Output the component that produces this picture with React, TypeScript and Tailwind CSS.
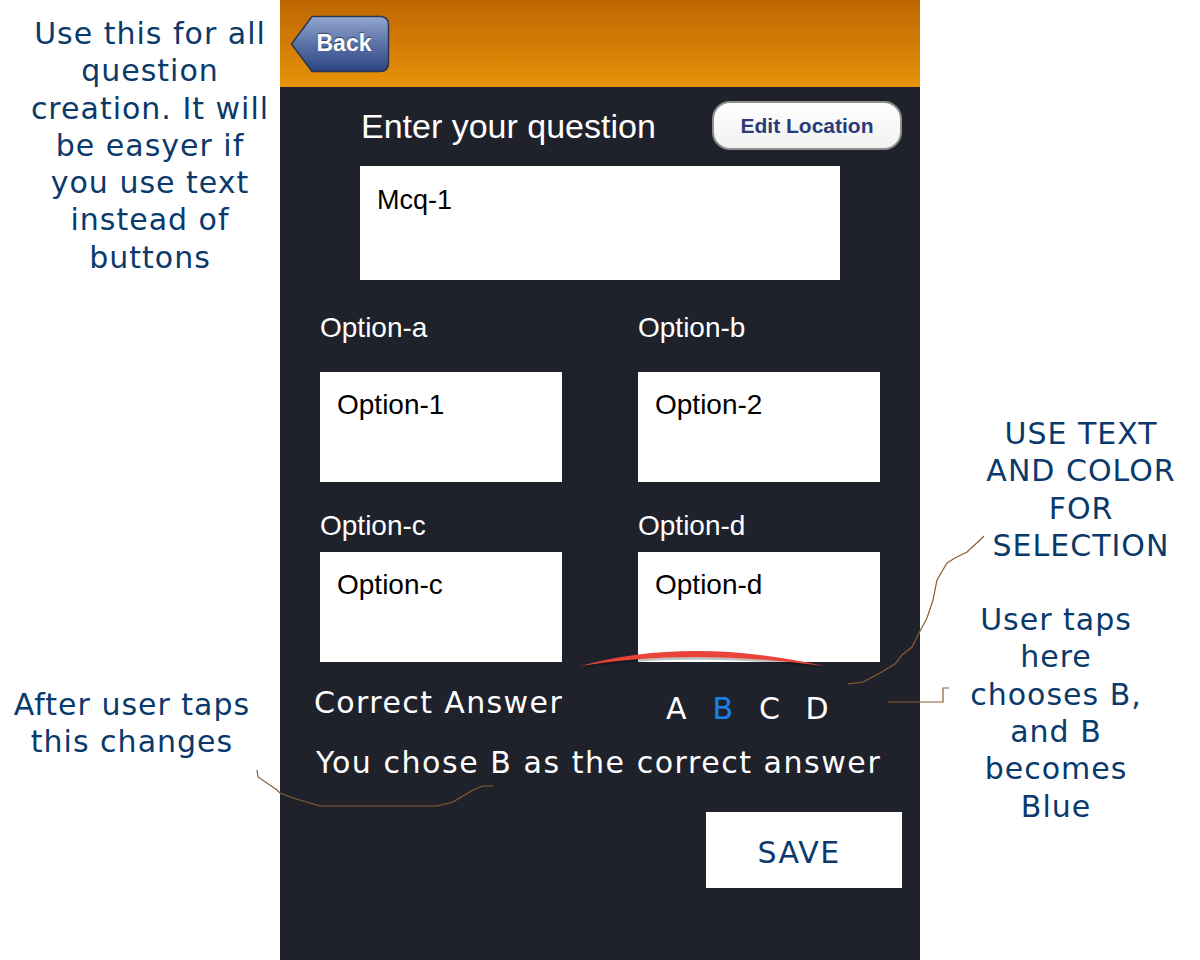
import { useState } from 'react'

const note = "font-['DejaVu_Sans',Verdana,sans-serif] text-[30px] leading-[37.3px] tracking-[1px] text-[#0a3a6b] text-center"
const ios = "font-['Liberation_Sans',Arial,sans-serif]"
const verd = "font-['DejaVu_Sans',Verdana,sans-serif]"

function BackButton() {
  return (
    <div className="relative w-[100px] h-[58px]">
      <svg className="absolute inset-0" width="100" height="58" viewBox="0 0 100 58">
        <defs>
          <linearGradient id="backGrad" x1="0" y1="0" x2="0" y2="1">
            <stop offset="0" stopColor="#95a7d0" />
            <stop offset="0.5" stopColor="#5b72a8" />
            <stop offset="1" stopColor="#2c4580" />
          </linearGradient>
        </defs>
        <path
          d="M1.5 29 L22 1.5 H90 Q98.5 1.5 98.5 10 V48 Q98.5 56.5 90 56.5 H22 Z"
          fill="url(#backGrad)"
          stroke="#2a3552"
          strokeWidth="1.5"
        />
      </svg>
      <span
        className={`${ios} absolute inset-0 flex items-center justify-center pl-[8px] text-[23px] font-bold text-white`}
        style={{ textShadow: '0 -1px 1px rgba(0,0,0,0.5)' }}
      >
        Back
      </span>
    </div>
  )
}

function OptionBox({ text }: { text: string }) {
  return (
    <div className={`${ios} h-[110px] bg-white pl-[17px] pt-[19px] text-[28px] leading-none text-black`}>{text}</div>
  )
}

export default function App() {
  const [answer, setAnswer] = useState('B')
  const letters = ['A', 'B', 'C', 'D']

  return (
    <div className="relative w-[1200px] h-[960px] bg-white flex overflow-hidden">
      {/* left notes */}
      <div className="w-[280px] flex flex-col">
        <div className={`${note} pl-[20px] pt-[15px]`}>
          Use this for all
          <br />
          question
          <br />
          creation. It will
          <br />
          be easyer if
          <br />
          you use text
          <br />
          instead of
          <br />
          buttons
        </div>
        <div className={`${note} pr-[16px] mt-[410px]`}>
          After user taps
          <br />
          this changes
        </div>
      </div>

      {/* phone */}
      <div className="w-[640px] h-[960px] bg-[#1f222b] flex flex-col">
        <div className="h-[87px] bg-gradient-to-b from-[#bd6602] to-[#e8930a] flex items-center pl-[10px]">
          <BackButton />
        </div>

        <div className="mt-[14px] flex items-center justify-between pl-[81px] pr-[18px]">
          <span className={`${ios} text-[34px] leading-none text-white`}>Enter your question</span>
          <button className="w-[190px] h-[49px] rounded-[18px] border-2 border-[#8f8f8f] bg-gradient-to-b from-white to-[#f1f1f1] flex items-center justify-center">
            <span className={`${ios} text-[21px] font-bold text-[#2a3b7a]`}>Edit Location</span>
          </button>
        </div>

        <div className={`${ios} mt-[16px] ml-[80px] w-[480px] h-[114px] bg-white pl-[17px] pt-[21px] text-[27px] leading-none text-black`}>
          Mcq-1
        </div>

        <div className="ml-[40px] mt-[34px] grid grid-cols-[242px_242px] gap-x-[76px]">
          <div className={`${ios} text-[28px] leading-none text-white`}>Option-a</div>
          <div className={`${ios} text-[28px] leading-none text-white`}>Option-b</div>
          <div className="mt-[30px]">
            <OptionBox text="Option-1" />
          </div>
          <div className="mt-[30px]">
            <OptionBox text="Option-2" />
          </div>
          <div className={`${ios} mt-[30px] text-[28px] leading-none text-white`}>Option-c</div>
          <div className={`${ios} mt-[30px] text-[28px] leading-none text-white`}>Option-d</div>
          <div className="mt-[12px]">
            <OptionBox text="Option-c" />
          </div>
          <div className="mt-[12px]">
            <OptionBox text="Option-d" />
          </div>
        </div>

        <div className="mt-[26px] flex items-start pl-[34px]">
          <span className={`${verd} w-[352px] text-[30px] leading-none tracking-[1.4px] text-white`}>Correct Answer</span>
          <div className="mt-[6px] flex">
            {letters.map((l) => (
              <span
                key={l}
                onClick={() => setAnswer(l)}
                className={`${verd} w-[46.5px] text-[30px] leading-none cursor-pointer ${answer === l ? 'text-[#1a80f0]' : 'text-white'}`}
              >
                {l}
              </span>
            ))}
          </div>
        </div>

        <div className={`${verd} mt-[24px] pl-[36px] text-[30px] leading-none tracking-[1.55px] text-white`}>
          You chose {answer} as the correct answer
        </div>

        <button className="mt-[34px] ml-[426px] w-[196px] h-[76px] bg-white flex items-center justify-center pr-[10px] pt-[6px]">
          <span className={`${verd} text-[30px] leading-none tracking-[1.3px] text-[#0b3a6e]`}>SAVE</span>
        </button>
      </div>

      {/* right notes */}
      <div className="w-[280px] flex flex-col">
        <div className={`${note} pl-[42px] pt-[415px]`}>
          USE TEXT
          <br />
          AND COLOR
          <br />
          FOR
          <br />
          SELECTION
        </div>
        <div className={`${note} mt-[37px] pr-[8px]`}>
          User taps
          <br />
          here
          <br />
          chooses B,
          <br />
          and B
          <br />
          becomes
          <br />
          Blue
        </div>
      </div>

      {/* hand-drawn marks */}
      <svg className="absolute inset-0 pointer-events-none" width="1200" height="960" viewBox="0 0 1200 960">
        <path d="M580 668 Q690 639 824 668 Q690 651 580 668 Z" fill="#000" opacity="0.25" />
        <path d="M580 666 Q690 636 824 666 Q690 648 580 666 Z" fill="#ea4339" />
        <polyline
          points="848,684 863,682 880,673 895,664 902,655 912,647 919,633 927,618 933,600 937,580 947,563 955,558 967,552 980,540 984,536"
          fill="none"
          stroke="#8b5d34"
          strokeWidth="1.2"
        />
        <polyline points="888,702 943,702 943,688 949,688" fill="none" stroke="#8b5d34" strokeWidth="1.2" />
        <polyline
          points="257,770 258,777 277,790 280,793 293,798 320,806 437,806 453,802 473,790 483,786 493,786"
          fill="none"
          stroke="#8b5d34"
          strokeWidth="1.2"
        />
      </svg>
    </div>
  )
}
